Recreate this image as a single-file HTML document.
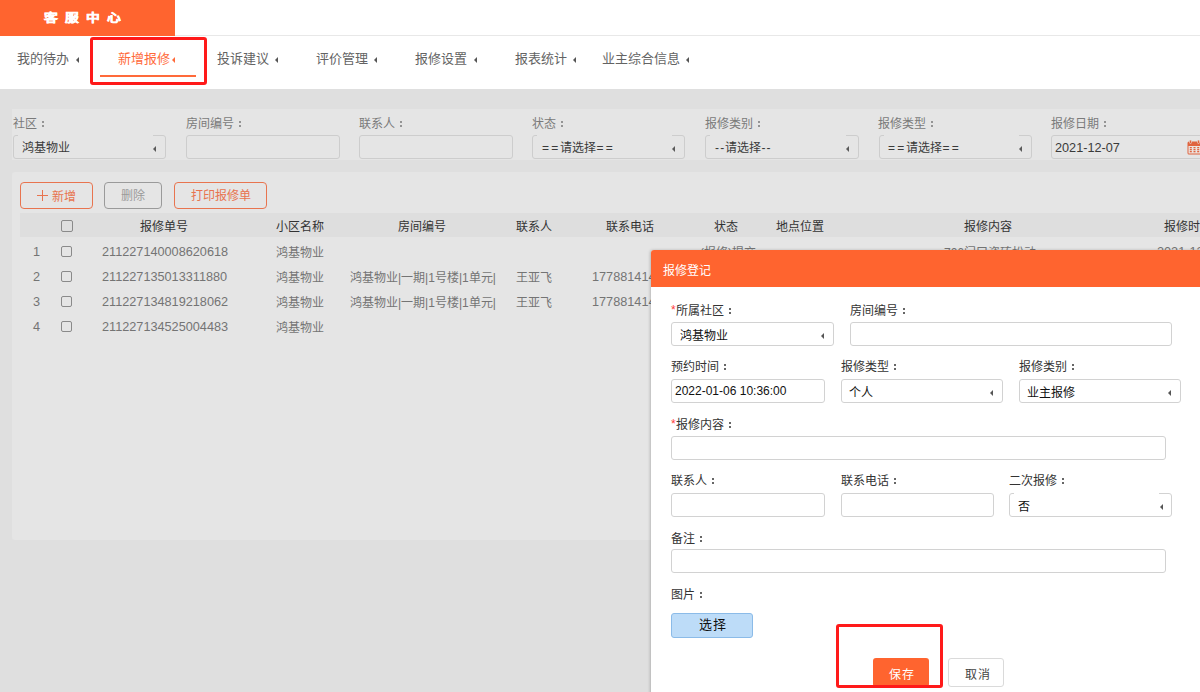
<!DOCTYPE html>
<html lang="zh-CN">
<head>
<meta charset="utf-8">
<style>
*{box-sizing:border-box;margin:0;padding:0}
html,body{width:1200px;height:692px;overflow:hidden;background:#dfdfdf;font-family:"Liberation Sans",sans-serif;}
.a{position:absolute;white-space:nowrap;line-height:20px;font-size:12px}
.r{position:absolute}
.eq{letter-spacing:2.2px}
.hy{letter-spacing:1.2px}
.c{display:inline-block;width:12px;height:0;position:relative}
.c::before{content:"";position:absolute;left:5px;top:-7px;width:2px;height:2px;background:currentColor;box-shadow:0 4px 0 currentColor;opacity:.75}
#top{position:absolute;left:0;top:0;width:1200px;height:89px;background:#fff}
#logo{position:absolute;left:0;top:0;width:175px;height:36px;background:#ff642f}
#logo span{position:absolute;left:44px;top:8.6px;color:#fff;font-weight:900;font-size:11.5px;line-height:18px;letter-spacing:6.4px;-webkit-text-stroke:0.45px #fff;transform:scaleX(1.2);transform-origin:0 0}
#topline{position:absolute;left:175px;top:35px;width:1025px;height:1px;background:#e8e8e8}
.nav{position:absolute;top:49px;font-size:13px;line-height:20px;color:#636363;white-space:nowrap}
.tri{position:absolute;width:0;height:0;border-top:3.2px solid transparent;border-bottom:3.2px solid transparent;border-right:3px solid #555}
.redbox{position:absolute;border:3px solid #ff1a1a;border-radius:3px}
#panel1{position:absolute;left:12px;top:109px;width:1188px;height:51px;background:#e5e5e5}
#panel2{position:absolute;left:12px;top:172px;width:1188px;height:368px;background:#e5e5e5;border-radius:3px 0 0 3px}
.flab{color:#7a7a7a}
.fbox{position:absolute;top:135px;width:154px;height:24px;border:1px solid #cdcdcd;border-radius:3px}
.fval{color:#3a3a3a}
.btn{position:absolute;top:182px;height:27px;border:1px solid #e8744f;border-radius:4px;color:#e8744f;font-size:12px;line-height:27px;text-align:center}
#thead{position:absolute;left:20px;top:213px;width:1180px;height:24px;background:#dedede}
.th{color:#333}
.td{color:#747474}
.cb{position:absolute;width:12px;height:12px;border:1px solid #8a8a8a;border-radius:2px}
#modal{position:absolute;left:651px;top:250px;width:600px;height:500px;background:#fff;border-radius:3px 0 0 0;box-shadow:-1px 0 3px rgba(0,0,0,0.2)}
#mhead{position:absolute;left:0;top:0;width:600px;height:37px;background:#ff642f;border-radius:3px 0 0 0}
.ml{color:#333}
.star{color:#ff3b3b;position:relative;top:-1px}
.mbox{position:absolute;height:24px;border:1px solid #d2d2d2;border-radius:3px;background:#fff}
.mval{color:#111}
</style>
</head>
<body>
<div id="top">
  <div id="logo"><span>客服中心</span></div>
  <div id="topline"></div>
  <div class="nav" style="left:17px">我的待办</div><div class="tri" style="left:76px;top:57px"></div>
  <div class="nav" style="left:118px;color:#ff6a3a">新增报修</div><div class="tri" style="left:172px;top:57px;border-right-color:#ff6a3a"></div>
  <div class="nav" style="left:217px">投诉建议</div><div class="tri" style="left:275px;top:57px"></div>
  <div class="nav" style="left:316px">评价管理</div><div class="tri" style="left:374px;top:57px"></div>
  <div class="nav" style="left:415px">报修设置</div><div class="tri" style="left:474px;top:57px"></div>
  <div class="nav" style="left:515px">报表统计</div><div class="tri" style="left:573px;top:57px"></div>
  <div class="nav" style="left:602px">业主综合信息</div><div class="tri" style="left:686px;top:57px"></div>
  <div class="r" style="left:100px;top:75px;width:96px;height:2px;background:#ff6a3a"></div>
  <div class="redbox" style="left:90px;top:37px;width:117px;height:48px"></div>
</div>

<!-- filters -->
<div id="panel1"></div>
<div class="a flab" style="left:13px;top:114px">社区<b class="c"></b></div>
<div class="a flab" style="left:186px;top:114px">房间编号<b class="c"></b></div>
<div class="a flab" style="left:359px;top:114px">联系人<b class="c"></b></div>
<div class="a flab" style="left:532px;top:114px">状态<b class="c"></b></div>
<div class="a flab" style="left:705px;top:114px">报修类别<b class="c"></b></div>
<div class="a flab" style="left:878px;top:114px">报修类型<b class="c"></b></div>
<div class="a flab" style="left:1051px;top:114px">报修日期<b class="c"></b></div>

<div class="fbox" style="left:13px;width:153px"></div>
<div class="fbox" style="left:186px"></div>
<div class="fbox" style="left:359px"></div>
<div class="fbox" style="left:532px;width:153px"></div>
<div class="fbox" style="left:705px;width:154px"></div>
<div class="fbox" style="left:879px;width:153px"></div>
<div class="fbox" style="left:1051px;width:160px"></div>
<div class="r" style="left:18px;top:135px;width:135px;height:1px;background:#e5e5e5"></div>
<div class="r" style="left:537px;top:135px;width:135px;height:1px;background:#e5e5e5"></div>
<div class="r" style="left:710px;top:135px;width:136px;height:1px;background:#e5e5e5"></div>
<div class="r" style="left:884px;top:135px;width:135px;height:1px;background:#e5e5e5"></div>
<div class="a fval" style="left:22px;top:138px">鸿基物业</div>
<div class="a fval" style="left:542px;top:138px"><span class="eq">==</span>请选择<span class="eq">==</span></div>
<div class="a fval" style="left:715px;top:138px"><span class="hy">--</span>请选择<span class="hy">--</span></div>
<div class="a fval" style="left:888px;top:138px"><span class="eq">==</span>请选择<span class="eq">==</span></div>
<div class="a fval" style="left:1055px;top:138px;font-size:12.7px">2021-12-07</div>
<div class="tri" style="left:153px;top:146px;border-right-color:#5a5a5a"></div>
<div class="tri" style="left:672px;top:146px;border-right-color:#5a5a5a"></div>
<div class="tri" style="left:846px;top:146px;border-right-color:#5a5a5a"></div>
<div class="tri" style="left:1019px;top:146px;border-right-color:#5a5a5a"></div>

<svg class="r" style="left:1187px;top:140px" width="15" height="15" viewBox="0 0 15 15">
<rect x="0.5" y="1.5" width="14" height="13" rx="1.5" fill="#e0643f"/>
<rect x="1.5" y="6" width="12" height="7.5" fill="#ebe4e1"/>
<rect x="2.5" y="0" width="2" height="3.5" rx="1" fill="#e0643f" stroke="#ebe4e1" stroke-width="0.6"/>
<rect x="10.5" y="0" width="2" height="3.5" rx="1" fill="#e0643f" stroke="#ebe4e1" stroke-width="0.6"/>
<g fill="#e0643f"><rect x="2.8" y="7" width="2" height="1.3"/><rect x="6.5" y="7" width="2" height="1.3"/><rect x="10.2" y="7" width="2" height="1.3"/>
<rect x="2.8" y="9" width="2" height="1.3"/><rect x="6.5" y="9" width="2" height="1.3"/><rect x="10.2" y="9" width="2" height="1.3"/>
<rect x="2.8" y="11" width="2" height="1.3"/><rect x="6.5" y="11" width="2" height="1.3"/><rect x="10.2" y="11" width="2" height="1.3"/></g>
</svg>
<!-- table panel -->
<div id="panel2"></div>
<div class="btn" style="left:20px;width:73px"></div><div class="r" style="left:37px;top:195px;width:11px;height:1.4px;background:#e8744f"></div><div class="r" style="left:41.8px;top:190px;width:1.4px;height:11px;background:#e8744f"></div><div class="a" style="left:52px;top:187px;color:#e8744f">新增</div>
<div class="btn" style="left:104px;width:58px;border-color:#9a9a9a;color:#9a9a9a">删除</div>
<div class="btn" style="left:174px;width:93px">打印报修单</div>
<div id="thead"></div>
<div class="cb" style="left:61px;top:220px"></div>
<div class="a th" style="left:140px;top:217px">报修单号</div>
<div class="a th" style="left:276px;top:217px">小区名称</div>
<div class="a th" style="left:398px;top:217px">房间编号</div>
<div class="a th" style="left:516px;top:217px">联系人</div>
<div class="a th" style="left:606px;top:217px">联系电话</div>
<div class="a th" style="left:714px;top:217px">状态</div>
<div class="a th" style="left:776px;top:217px">地点位置</div>
<div class="a th" style="left:964px;top:217px">报修内容</div>
<div class="a th" style="left:1164px;top:217px">报修时间</div>

<div class="a td" style="left:33px;top:242px;font-size:12.7px">1</div>
<div class="cb" style="left:61px;top:246px;width:11px;height:11px"></div>
<div class="a td" style="left:102px;top:242px;font-size:12.7px">211227140008620618</div>
<div class="a td" style="left:276px;top:243px">鸿基物业</div>
<div class="a td" style="left:700px;top:243px">(报修)提交</div>
<div class="a td" style="left:944px;top:243px">706门口瓷砖松动</div>
<div class="a td" style="left:1157px;top:242px;font-size:12.7px">2021-12-27</div>

<div class="a td" style="left:33px;top:267px;font-size:12.7px">2</div>
<div class="cb" style="left:61px;top:271px;width:11px;height:11px"></div>
<div class="a td" style="left:102px;top:267px;font-size:12.7px">211227135013311880</div>
<div class="a td" style="left:276px;top:268px">鸿基物业</div>
<div class="a td" style="left:350px;top:268px;width:146px;overflow:hidden">鸿基物业|一期|1号楼|1单元|</div>
<div class="a td" style="left:516px;top:268px">王亚飞</div>
<div class="a td" style="left:592px;top:267px;font-size:12.7px">17788141414</div>

<div class="a td" style="left:33px;top:292px;font-size:12.7px">3</div>
<div class="cb" style="left:61px;top:296px;width:11px;height:11px"></div>
<div class="a td" style="left:102px;top:292px;font-size:12.7px">211227134819218062</div>
<div class="a td" style="left:276px;top:293px">鸿基物业</div>
<div class="a td" style="left:350px;top:293px;width:146px;overflow:hidden">鸿基物业|一期|1号楼|1单元|</div>
<div class="a td" style="left:516px;top:293px">王亚飞</div>
<div class="a td" style="left:592px;top:292px;font-size:12.7px">17788141414</div>

<div class="a td" style="left:33px;top:317px;font-size:12.7px">4</div>
<div class="cb" style="left:61px;top:321px;width:11px;height:11px"></div>
<div class="a td" style="left:102px;top:317px;font-size:12.7px">211227134525004483</div>
<div class="a td" style="left:276px;top:318px">鸿基物业</div>

<!-- modal -->
<div id="modal">
  <div id="mhead"></div>
</div>
<div class="a" style="left:663px;top:261px;color:#fff">报修登记</div>

<div class="a ml" style="left:671px;top:301px"><span class="star">*</span>所属社区<b class="c"></b></div>
<div class="mbox" style="left:671px;top:322px;width:163px"></div>
<div class="a mval" style="left:680px;top:326px">鸿基物业</div>
<div class="tri" style="left:821px;top:333px;border-right-color:#555"></div>

<div class="a ml" style="left:850px;top:301px">房间编号<b class="c"></b></div>
<div class="mbox" style="left:850px;top:322px;width:322px"></div>

<div class="a ml" style="left:671px;top:357px">预约时间<b class="c"></b></div>
<div class="mbox" style="left:671px;top:379px;width:154px"></div>
<div class="a mval" style="left:675px;top:381px">2022-01-06 10:36:00</div>

<div class="a ml" style="left:841px;top:357px">报修类型<b class="c"></b></div>
<div class="mbox" style="left:841px;top:379px;width:162px"></div>
<div class="a mval" style="left:849px;top:383px">个人</div>
<div class="tri" style="left:990px;top:390px;border-right-color:#555"></div>

<div class="a ml" style="left:1019px;top:357px">报修类别<b class="c"></b></div>
<div class="mbox" style="left:1019px;top:379px;width:162px"></div>
<div class="a mval" style="left:1027px;top:383px">业主报修</div>
<div class="tri" style="left:1168px;top:390px;border-right-color:#555"></div>

<div class="a ml" style="left:671px;top:415px"><span class="star">*</span>报修内容<b class="c"></b></div>
<div class="mbox" style="left:671px;top:436px;width:495px"></div>

<div class="a ml" style="left:671px;top:471px">联系人<b class="c"></b></div>
<div class="mbox" style="left:671px;top:493px;width:154px"></div>
<div class="a ml" style="left:841px;top:471px">联系电话<b class="c"></b></div>
<div class="mbox" style="left:841px;top:493px;width:153px"></div>
<div class="a ml" style="left:1009px;top:471px">二次报修<b class="c"></b></div>
<div class="mbox" style="left:1009px;top:493px;width:163px"></div><div class="r" style="left:1014px;top:493px;width:145px;height:1px;background:#fff"></div>
<div class="a mval" style="left:1018px;top:497px">否</div>
<div class="tri" style="left:1160px;top:504px;border-right-color:#555"></div>

<div class="a ml" style="left:671px;top:529px">备注<b class="c"></b></div>
<div class="mbox" style="left:671px;top:549px;width:495px"></div>

<div class="a ml" style="left:671px;top:585px">图片<b class="c"></b></div>
<div class="r" style="left:671px;top:613px;width:82px;height:25px;background:#bddcf8;border:1px solid #8bbbe8;border-radius:3px"></div>
<div class="a" style="left:698.5px;top:615px;color:#111;font-size:13px;font-weight:500;letter-spacing:1.6px">选择</div>

<div class="r" style="left:873px;top:658px;width:56px;height:29px;background:#ff642f;border-radius:3px"></div>
<div class="a" style="left:889px;top:665px;color:#fff;font-size:12px;letter-spacing:0.5px">保存</div>
<div class="r" style="left:948px;top:658px;width:56px;height:29px;background:#fff;border:1px solid #dadada;border-radius:3px"></div>
<div class="a" style="left:965px;top:665px;color:#444;font-size:12px;letter-spacing:0.5px">取消</div>

<div class="redbox" style="left:836px;top:624px;width:107px;height:64px"></div>
</body>
</html>
